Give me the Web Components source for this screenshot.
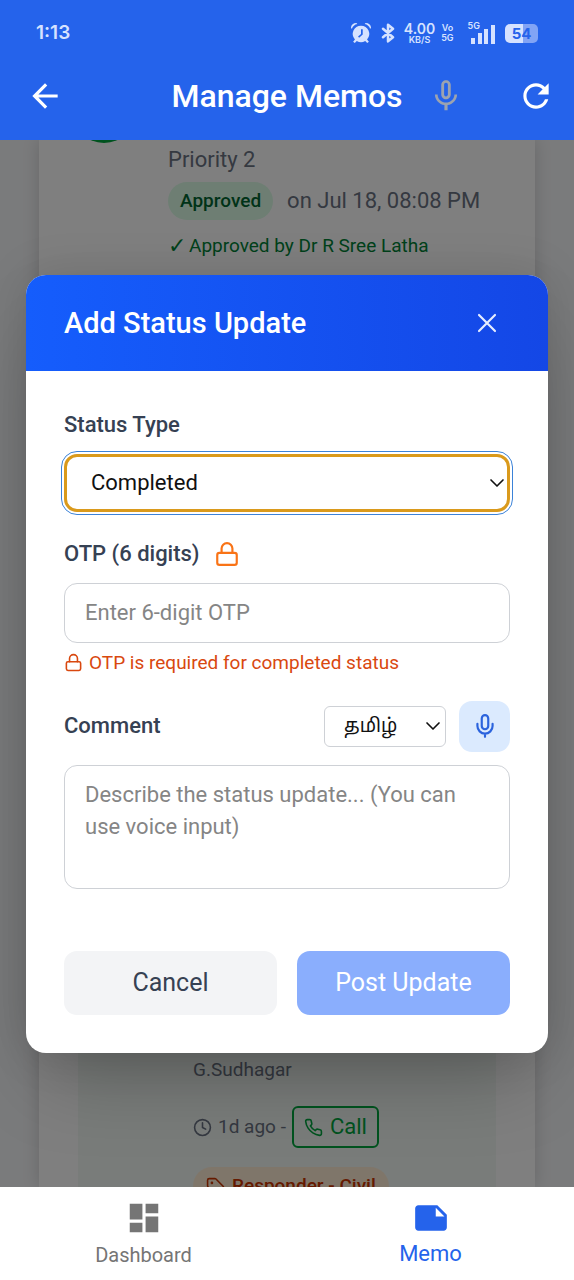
<!DOCTYPE html>
<html lang="en">
<head>
<meta charset="utf-8">
<meta name="viewport" content="width=device-width, initial-scale=1">
<title>Manage Memos</title>
<style>
  body { margin: 0; font-family: Roboto, "Noto Sans", sans-serif; }
</style>
</head>
<body>
<memo-app></memo-app>
<script>
const ICONS = {
  back: ['fill', '<path d="M20 11H7.83l5.59-5.59L12 4l-8 8 8 8 1.41-1.41L7.83 13H20z"/>'],
  refresh: ['fill', '<path d="M17.65 6.35C16.2 4.9 14.21 4 12 4c-4.42 0-7.99 3.58-7.99 8s3.57 8 7.99 8c3.73 0 6.84-2.55 7.73-6h-2.08c-.82 2.33-3.04 4-5.65 4-3.31 0-6-2.69-6-6s2.69-6 6-6c1.66 0 3.14.69 4.22 1.78L13 11h7V4z"/>'],
  micOutline: ['fill', '<path d="M12 14c1.66 0 3-1.34 3-3V5c0-1.66-1.34-3-3-3S9 3.34 9 5v6c0 1.66 1.34 3 3 3m-1.2-9.1c0-.66.54-1.2 1.2-1.2s1.2.54 1.2 1.2l-.01 6.2c0 .66-.53 1.2-1.19 1.2s-1.2-.54-1.2-1.2zm6.5 6.1c0 3-2.54 5.1-5.3 5.1S6.7 14 6.7 11H5c0 3.41 2.72 6.23 6 6.72V21h2v-3.28c3.28-.48 6-3.3 6-6.72z"/>'],
  dashboard: ['fill', '<path d="M3 13h8V3H3zm0 8h8v-6H3zm10 0h8V11h-8zm0-18v6h8V3z"/>'],
  note: ['fill', '<path d="m22 10-6-6H4c-1.1 0-2 .9-2 2v12.01c0 1.1.9 1.99 2 1.99l16-.01c1.1 0 2-.89 2-2zm-7-4.500 5.500 5.500H15z"/>'],
  mic: ['line', '<rect x="9" y="2" width="6" height="13" rx="3"/><path d="M19 10v2a7 7 0 0 1-14 0v-2M12 19v3"/>'],
  lock: ['line', '<rect x="3" y="11" width="18" height="11" rx="2"/><path d="M7 11V7a5 5 0 0 1 10 0v4"/>'],
  close: ['line', '<path d="M18 6 6 18M6 6l12 12"/>'],
  chevron: ['line', '<path d="m3 7.500 9 9 9-9"/>'],
  clock: ['line', '<circle cx="12" cy="12" r="10"/><path d="M12 6v6l4 2"/>'],
  phone: ['line', '<path d="M22 16.920v3a2 2 0 0 1-2.180 2 19.790 19.790 0 0 1-8.630-3.070 19.500 19.500 0 0 1-6-6 19.790 19.790 0 0 1-3.070-8.670A2 2 0 0 1 4.110 2h3a2 2 0 0 1 2 1.720 12.840 12.840 0 0 0 .7 2.810 2 2 0 0 1-.45 2.110L8.090 9.910a16 16 0 0 0 6 6l1.270-1.270a2 2 0 0 1 2.110-.45 12.840 12.840 0 0 0 2.810.7A2 2 0 0 1 22 16.920z"/>'],
  tag: ['line', '<path d="M12.586 2.586A2 2 0 0 0 11.172 2H4a2 2 0 0 0-2 2v7.172a2 2 0 0 0 .586 1.414l8.704 8.704a2.426 2.426 0 0 0 3.420 0l6.580-6.580a2.426 2.426 0 0 0 0-3.420z"/><circle cx="7.500" cy="7.500" r=".7"/>'],
  alarm: ['fill', '<path fill-rule="evenodd" d="M12 4a9 9 0 0 1 6.600 15.100l2 2.400-1.800 1.500-2.200-2.400a9 9 0 0 1-9.200 0L5.200 23l-1.800-1.500 2-2.400A9 9 0 0 1 12 4zm0 4v5l-3.200 2.800 1.100 1.300 4-3.400V8z"/><path d="M2 7.500A8 8 0 0 1 8 2.200L7 1a6 6 0 0 0-6 5zM22 7.500a8 8 0 0 0-6-5.300L17 1a6 6 0 0 1 6 5z"/>'],
  bluetooth: ['line', '<path d="m6 7 12 10-6 5V2l6 5L6 17"/>'],
  signal: ['fill', '<path d="M0 17h4v6H0zM7 12h4v11H7zM13 8h4v15h-4zM20 4h4v19h-4z"/>']
};

function define(name, html) {
  const template = document.createElement('template');
  template.innerHTML = '<style>*{box-sizing:border-box}</style>' + html;
  customElements.define(name, class extends HTMLElement {
    constructor() {
      super();
      this.attachShadow({ mode: 'open' }).append(template.content.cloneNode(true));
    }
  });
}

customElements.define('ui-icon', class extends HTMLElement {
  connectedCallback() {
    if (this.shadowRoot) return;
    const [kind, shapes] = ICONS[this.getAttribute('name')];
    this.attachShadow({ mode: 'open' }).innerHTML = `
      <style>
        :host { display: inline-block; flex: none; width: var(--size, 24px); height: var(--size, 24px); }
        svg { display: block; width: 100%; height: 100%; }
        .fill { fill: currentColor; }
        .line { fill: none; stroke: currentColor; stroke-width: var(--stroke, 2); stroke-linecap: round; stroke-linejoin: round; }
      </style>
      <svg class="${kind}" viewBox="0 0 24 24" aria-hidden="true">${shapes}</svg>`;
  }
});

define('status-bar', `
  <style>
    :host { display: flex; align-items: center; justify-content: space-between; height: 40px; padding: 0 36px; color: #d6e2ff; }
    .time { font: 600 19px/24px Inter, sans-serif; }
    .tray { display: flex; align-items: center; gap: 6px; }
    .alarm { --size: 22px; }
    .bt { --size: 20px; --stroke: 3; }
    .stack { display: grid; justify-items: center; font-family: Inter, sans-serif; font-weight: 600; }
    .rate { font-size: 14px; line-height: 12px; }
    .unit { font-size: 9px; line-height: 9px; }
    .vo { font-size: 9px; line-height: 10px; }
    .net { display: flex; align-items: flex-end; margin: 0 4px 0 8px; font: 600 9px/10px Inter, sans-serif; }
    .net span { align-self: flex-start; }
    .net ui-icon { --size: 24px; margin-left: -9px; }
    .battery { display: grid; place-items: center; width: 33px; height: 19px; border-radius: 5px; background: linear-gradient(90deg, #d6e2ff 56%, #82a4f5 56%); color: #2563eb; font: 700 15px/19px Inter, sans-serif; }
  </style>
  <span class="time">1:13</span>
  <span class="tray">
    <ui-icon class="alarm" name="alarm"></ui-icon>
    <ui-icon class="bt" name="bluetooth"></ui-icon>
    <span class="stack"><span class="rate">4.00</span><span class="unit">KB/S</span></span>
    <span class="stack vo"><span>Vo</span><span>5G</span></span>
    <span class="net"><span>5G</span><ui-icon name="signal"></ui-icon></span>
    <span class="battery">54</span>
  </span>`);

define('app-header', `
  <style>
    :host { display: block; padding: 13px 0 2px; background: #2563eb; color: #fff; }
    .bar { display: grid; grid-template-columns: 1fr auto 1fr; align-items: center; height: 85px; }
    h1 { margin: 0; font-size: 32px; line-height: 40px; font-weight: 500; }
    button { display: block; padding: 0; border: 0; background: none; color: inherit; }
    ui-icon { display: block; --size: 38px; }
    .start { padding-left: 26px; }
    .end { display: flex; justify-content: space-between; padding: 0 19px 0 24px; }
    .mic { color: #9ca3af; }
  </style>
  <status-bar></status-bar>
  <div class="bar">
    <div class="start"><button aria-label="Back"><ui-icon name="back"></ui-icon></button></div>
    <h1>Manage Memos</h1>
    <div class="end">
      <button class="mic" aria-label="Voice search"><ui-icon name="micOutline"></ui-icon></button>
      <button aria-label="Refresh"><ui-icon name="refresh"></ui-icon></button>
    </div>
  </div>`);

define('memo-feed', `
  <style>
    :host { display: grid; overflow: hidden; padding: 0 39px; background: #f5f6f8; color: #6a7282; }
    .card { display: flex; flex-direction: column; justify-content: space-between; min-height: 0; padding: 0 39px; background: #fff; box-shadow: 0 0 16px rgba(0,0,0,.16); }
    .memo { display: grid; grid-template-columns: 52px 1fr; column-gap: 38px; font-size: 22px; line-height: 32px; }
    .avatar { width: 64px; height: 64px; margin: -61px 0 0 -6px; border-radius: 50%; background: #00a63e; }
    .info { padding-top: 4px; }
    .row { display: flex; align-items: center; gap: 14px; margin-top: 6px; }
    .approved { padding: 0 12px; border-radius: 19px; background: #dcfce7; color: #016630; font-size: 19px; line-height: 38px; font-weight: 500; }
    .by { display: flex; gap: 3px; margin-top: 13px; color: #008236; font-size: 19px; line-height: 26px; }
    .by span { font-size: 22px; }
    .thread { display: flex; flex-direction: column; align-items: flex-start; margin-bottom: -18px; padding: 780px 0 0 115px; background: #f2f8f5; font-size: 19px; line-height: 26px; }
    .when { display: flex; align-items: center; gap: 6px; margin: 23px 0 19px; }
    ui-icon { --size: 19px; }
    button { display: flex; align-items: center; gap: 7px; height: 42px; padding: 0 10px; border: 2px solid #00a63e; border-radius: 6px; background: none; color: #00a63e; font: 400 22px/32px Roboto, sans-serif; }
    .role { display: flex; align-items: center; gap: 7px; height: 38px; padding: 0 13px; border-radius: 19px; background: #ffedd4; color: #ca3500; font-weight: 500; }
  </style>
  <article class="card">
    <div class="memo">
      <div class="avatar"></div>
      <div class="info">
        <div>Priority 2</div>
        <div class="row"><span class="approved">Approved</span><span>on Jul 18, 08:08 PM</span></div>
        <div class="by"><span>✓</span>Approved by Dr R Sree Latha</div>
      </div>
    </div>
    <div class="thread">
      <div>G.Sudhagar</div>
      <div class="when"><ui-icon name="clock"></ui-icon><span>1d ago -</span><button><ui-icon name="phone"></ui-icon>Call</button></div>
      <div class="role"><ui-icon name="tag"></ui-icon>Responder - Civil</div>
    </div>
  </article>`);

define('modal-dialog', `
  <style>
    :host { display: grid; align-items: center; padding: 0 26px; background: rgba(0,0,0,.5); }
    section { overflow: hidden; border-radius: 20px; background: #fff; box-shadow: 0 40px 80px -19px rgba(0,0,0,.25), 0 0 48px rgba(0,0,0,.12); }
    header { display: flex; align-items: center; justify-content: space-between; height: 96px; padding: 0 45px 0 38px; background: linear-gradient(90deg, #155dfc, #1447e6); color: #fff; }
    h2 { margin: 0; font-size: 29px; line-height: 40px; font-weight: 500; }
    button { padding: 0; border: 0; background: none; color: #e6edff; }
    ui-icon { display: block; --size: 32px; --stroke: 1.600; }
    .body { padding: 38px; }
  </style>
  <section role="dialog" aria-modal="true" aria-labelledby="title">
    <header>
      <h2 id="title"><slot name="title"></slot></h2>
      <button aria-label="Close"><ui-icon name="close"></ui-icon></button>
    </header>
    <div class="body"><slot></slot></div>
  </section>`);

define('status-form', `
  <style>
    :host { display: block; color: #364153; font-size: 22px; line-height: 32px; }
    form { display: flex; flex-direction: column; }
    label { font-weight: 500; }
    select, input, textarea { width: 100%; margin: 0; border: 1px solid #ced1d6; border-radius: 13px; background: #fff; color: #111; font: 400 22px/32px Roboto, "Noto Sans", "Noto Sans Tamil", sans-serif; }
    input, textarea { padding: 13px 20px; }
    input { height: 60px; }
    textarea { display: block; height: 124px; resize: none; overflow: hidden; }
    ::placeholder { color: #858585; opacity: 1; }
    .field { display: flex; flex-direction: column; gap: 13px; margin-bottom: 26px; }
    .pick { display: grid; align-items: center; }
    .pick > * { grid-area: 1 / 1; }
    .pick ui-icon { justify-self: end; margin-right: 5px; pointer-events: none; color: #111; --size: 16px; --stroke: 2.500; }
    select { appearance: none; height: 58px; padding: 0 24px; }
    .type select { border: 3px solid #da9a1c; outline: 1px solid #3b82d8; outline-offset: 2px; }
    .otp { display: flex; align-items: center; gap: 14px; }
    .otp ui-icon { --size: 26px; color: #f97316; }
    .hint { display: flex; align-items: center; gap: 6px; margin: -6px 0 0; color: #d9480f; font-size: 19px; line-height: 25px; }
    .hint ui-icon { --size: 19px; }
    .tools { display: flex; align-items: center; gap: 13px; }
    .tools label { flex: 1; }
    .lang { width: 122px; }
    .lang select { height: 41px; padding: 0 19px; border-radius: 6px; font-size: 19px; }
    button { border: 0; border-radius: 13px; font: 400 25px/32px Roboto, sans-serif; }
    .mic { display: grid; place-items: center; width: 51px; height: 51px; padding: 0; background: #dbeafe; color: #2b63dd; }
    .mic ui-icon { --size: 26px; }
    .actions { display: grid; grid-template-columns: 1fr 1fr; gap: 20px; margin-top: 36px; }
    .actions button { height: 64px; }
    .cancel { background: #f3f4f6; color: #364153; }
    .post { background: #8aaefd; color: #fff; }
  </style>
  <form>
    <div class="field">
      <label for="type">Status Type</label>
      <div class="pick type"><select id="type"><option>Completed</option></select><ui-icon name="chevron"></ui-icon></div>
    </div>
    <div class="field">
      <div class="otp"><label for="otp">OTP (6 digits)</label><ui-icon name="lock"></ui-icon></div>
      <input id="otp" inputmode="numeric" maxlength="6" placeholder="Enter 6-digit OTP">
      <p class="hint"><ui-icon name="lock"></ui-icon>OTP is required for completed status</p>
    </div>
    <div class="field">
      <div class="tools">
        <label for="comment">Comment</label>
        <div class="pick lang"><select aria-label="Language"><option lang="ta">தமிழ்</option></select><ui-icon name="chevron"></ui-icon></div>
        <button class="mic" type="button" aria-label="Dictate"><ui-icon name="mic"></ui-icon></button>
      </div>
      <textarea id="comment" placeholder="Describe the status update... (You can use voice input)"></textarea>
    </div>
    <div class="actions">
      <button class="cancel" type="button">Cancel</button>
      <button class="post" type="submit">Post Update</button>
    </div>
  </form>`);

define('bottom-nav', `
  <style>
    :host { display: block; background: #fff; }
    nav { display: grid; grid-template-columns: 1fr 1fr; height: 93px; }
    a { display: flex; flex-direction: column; align-items: center; padding-top: 12px; color: #757575; font-size: 20px; line-height: 36px; text-decoration: none; }
    a.active { color: #2563eb; font-size: 22px; line-height: 34px; }
    ui-icon { --size: 38px; }
  </style>
  <nav>
    <a href="#dashboard"><ui-icon name="dashboard"></ui-icon>Dashboard</a>
    <a class="active" href="#memo" aria-current="page"><ui-icon name="note"></ui-icon>Memo</a>
  </nav>`);

define('memo-app', `
  <style>
    :host { display: grid; grid-template-rows: auto 1fr auto; min-height: 100vh; }
    main { display: grid; grid-template-columns: minmax(0, 1fr); overflow: hidden; }
    main > * { grid-area: 1 / 1; }
    modal-dialog { z-index: 1; }
  </style>
  <app-header></app-header>
  <main>
    <memo-feed></memo-feed>
    <modal-dialog><span slot="title">Add Status Update</span><status-form></status-form></modal-dialog>
  </main>
  <bottom-nav></bottom-nav>`);
</script>
</body>
</html>
